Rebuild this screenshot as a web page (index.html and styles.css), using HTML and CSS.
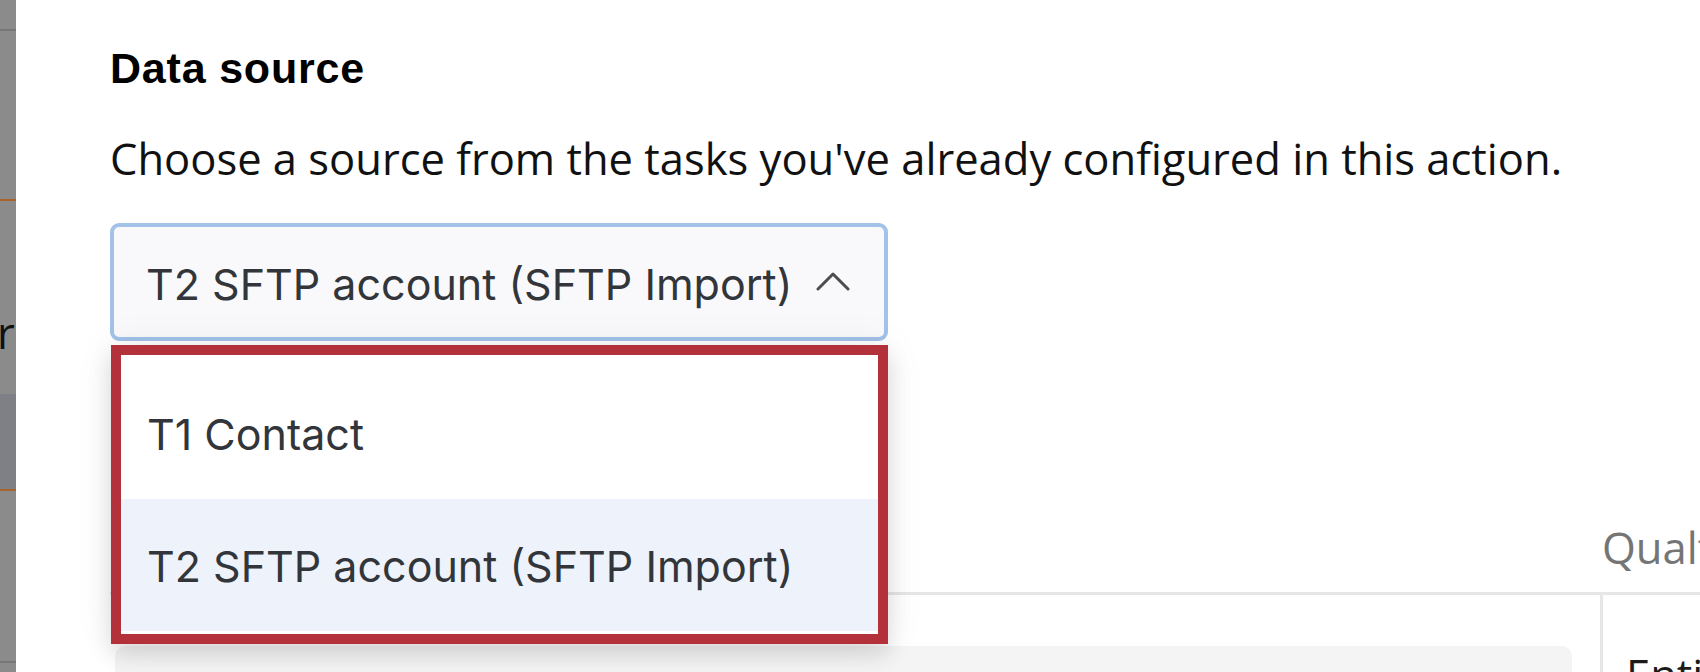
FILE: index.html
```html
<!DOCTYPE html>
<html lang="en">
<head>
<meta charset="utf-8">
<title>Data source</title>
<link rel="stylesheet" href="styles.css">
</head>
<body>
<div class="app">
  <aside class="backdrop">
    <div class="bd bd-a"></div>
    <div class="bd bd-line"></div>
    <div class="bd bd-b"></div>
    <div class="bd bd-orange"></div>
    <div class="bd bd-c"><span class="bd-text">r</span></div>
    <div class="bd bd-d"></div>
    <div class="bd bd-orange"></div>
    <div class="bd bd-e"></div>
    <div class="bd bd-line"></div>
    <div class="bd bd-f"></div>
  </aside>
  <main class="panel">
    <h2 class="title">Data source</h2>
    <p class="desc">Choose a source from the tasks you've already configured in this action.</p>
    <div class="select-wrap">
      <div class="select">
        <span class="select-value">T2 SFTP account (SFTP Import)</span>
        <svg class="chevron" width="34" height="19" viewBox="0 0 34 19" aria-hidden="true"><polyline points="2,17 17,2 32,17" fill="none" stroke="#4d4d4d" stroke-width="3" stroke-linecap="round" stroke-linejoin="round"/></svg>
      </div>
      <ul class="menu">
        <li class="menu-item">T1 Contact</li>
        <li class="menu-item active">T2 SFTP account (SFTP Import)</li>
      </ul>
    </div>
    <div class="table">
      <div class="row head">
        <div class="cell"></div>
        <div class="cell th-q">Qualtrics field</div>
      </div>
      <div class="row body-row">
        <div class="cell td-field"><div class="field"></div></div>
        <div class="cell td-e">Entity</div>
      </div>
    </div>
  </main>
</div>
</body>
</html>
```
FILE: styles.css
```css
html, body {
  margin: 0;
  padding: 0;
  background: #ffffff;
}
body {
  font-family: "Open Sans", "Noto Sans", sans-serif;
}
.app {
  display: flex;
  width: 1700px;
  height: 672px;
  overflow: hidden;
}

/* dimmed page behind the panel */
.backdrop {
  width: 16px;
  flex: none;
  background: #8b8b8b;
  display: flex;
  flex-direction: column;
  overflow: hidden;
}
.bd { flex: none; }
.bd-a { height: 29px; }
.bd-line { height: 2px; background: #767676; }
.bd-b { height: 168px; }
.bd-orange { height: 2px; background: #a8622c; }
.bd-c {
  height: 193px;
  box-sizing: border-box;
  padding-top: 110px;
  font-size: 43.5px;
  line-height: 1;
  color: #111;
}
.bd-text { display: block; margin-left: -3px; }
.bd-d { height: 95px; background: #7f8085; }
.bd-e { height: 170px; }
.bd-f { flex: 1; }

/* side panel */
.panel {
  flex: 1;
  padding-left: 94px;
  position: relative;
  min-width: 0;
}
.title {
  margin: 47px 0 0;
  font-family: "Liberation Sans", Arial, sans-serif;
  font-weight: bold;
  font-size: 43px;
  line-height: 1;
  letter-spacing: 0.8px;
  color: #000;
}
.desc {
  margin: 47px 0 0;
  font-size: 43.5px;
  line-height: 1;
  color: #111;
  white-space: nowrap;
}

.select-wrap {
  position: relative;
  width: 778px;
  margin-top: 42px;
  z-index: 2;
}
.select {
  box-sizing: border-box;
  height: 118px;
  border: 4px solid #a3c2e9;
  border-radius: 9px;
  background: #f9f9fb;
  display: flex;
  align-items: center;
  gap: 24px;
  padding: 6px 0 0 32px;
  font-family: "Inter", "Open Sans", sans-serif;
  font-size: 43px;
  line-height: 1;
  color: #32363a;
}
.select-value { white-space: nowrap; }
.chevron { flex: none; display: block; margin-top: -6px; }

.menu {
  position: absolute;
  left: 1px;
  right: 0;
  top: calc(100% + 4px);
  margin: 0;
  padding: 12px 0 3px;
  list-style: none;
  background: #ffffff;
  border: 10px solid #b3313a;
  box-shadow: 0 10px 22px rgba(0, 0, 0, 0.13), 0 0 40px rgba(0, 0, 0, 0.06);
}
.menu-item {
  box-sizing: border-box;
  height: 132px;
  display: flex;
  align-items: center;
  padding: 4px 0 0 26px;
  font-family: "Inter", "Open Sans", sans-serif;
  font-size: 43px;
  line-height: 1;
  color: #32363a;
  white-space: nowrap;
}
.menu-item.active { background: #eef2fa; }

/* table behind the menu */
.table { margin-top: 185px; }
.row {
  display: grid;
  grid-template-columns: 1490px 1fr;
}
.head { border-bottom: 3px solid #e6e6e6; }
.cell { min-width: 0; }
.th-q {
  padding: 0 0 23px 2px;
  font-size: 43.5px;
  line-height: 1;
  color: #757575;
  white-space: nowrap;
  overflow: hidden;
}
.body-row { height: 200px; }
.td-field { padding: 51px 28px 0 5px; }
.field {
  height: 100px;
  background: #f4f4f4;
  border-radius: 10px;
}
.td-e {
  border-left: 3px solid #e6e6e6;
  padding: 58px 0 0 23px;
  font-size: 43.5px;
  line-height: 1;
  color: #1b1b1b;
  white-space: nowrap;
  overflow: hidden;
}
```
